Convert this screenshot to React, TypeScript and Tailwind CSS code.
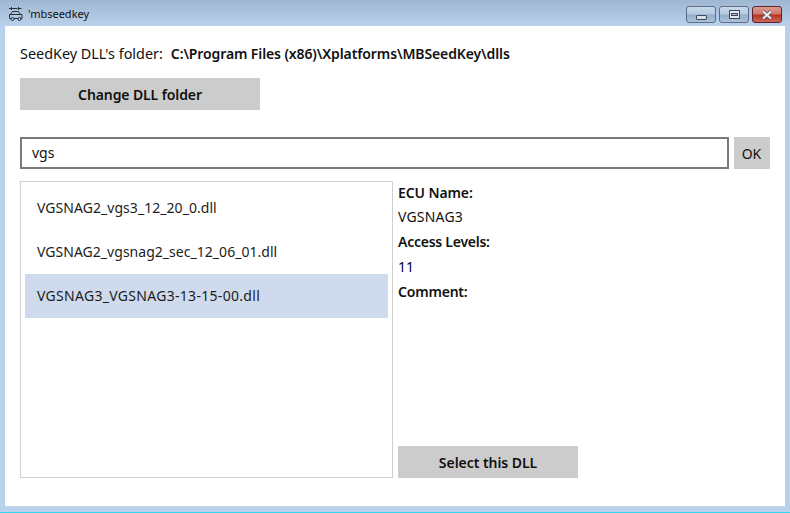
import React from "react";

const font = { fontFamily: '"Noto Sans", "Open Sans", sans-serif' };

function AppIcon() {
  return (
    <svg width="16" height="16" viewBox="0 0 16 16" fill="none" stroke="#2a2f38" strokeWidth="1">
      <path d="M1 2.5h2M3.5 1v3M3.5 2.5h6M10.5 1v3M10.5 2.5h3" />
      <path d="M2.5 8.5 4.5 5.5h6l2 3" />
      <path d="M1.5 8.5h12.5v4h-12.5z" />
      <circle cx="4.5" cy="13" r="1.5" fill="#b9cde4" />
      <circle cx="11.5" cy="13" r="1.5" fill="#b9cde4" />
    </svg>
  );
}

function CaptionButton({ kind }: { kind: "min" | "max" | "close" }) {
  const isClose = kind === "close";
  return (
    <div
      className={
        "flex h-[17px] w-[30px] items-center justify-center rounded-[3px] border " +
        (isClose
          ? "border-[#5c2230] bg-[linear-gradient(#dc9a90_0%,#cf7a6c_45%,#b8321f_55%,#c9695a_100%)]"
          : "border-[#5d6d8a] bg-[linear-gradient(#c9d9ea_0%,#b4cbe2_45%,#92aecb_55%,#abc4dc_100%)]")
      }
    >
      {kind === "min" && <div className="mt-[6px] h-[5px] w-[11px] rounded-[1px] border border-[#3f4654] bg-[#d9dfe8]" />}
      {kind === "max" && (
        <div className="flex h-[9px] w-[11px] items-center justify-center border border-[#3f4654] bg-[#e4e8ee]">
          <div className="h-[3px] w-[7px] border border-[#3f4654] bg-[#a9c0d8]" />
        </div>
      )}
      {isClose && (
        <svg width="12" height="10" viewBox="0 0 12 10">
          <path d="M2 1.5 10 8.5M10 1.5 2 8.5" stroke="#4b5563" strokeWidth="3.4" />
          <path d="M2 1.5 10 8.5M10 1.5 2 8.5" stroke="#eef1f5" strokeWidth="2" />
        </svg>
      )}
    </div>
  );
}

export default function App() {
  return (
    <div className="flex h-[513px] w-[790px] flex-col overflow-hidden bg-[#b9d1ea]" style={font}>
      <div className="flex h-[26px] shrink-0 items-start justify-between bg-[linear-gradient(#9fb6d2_0%,#b9d1ea_100%)]">
        <div className="flex items-center gap-[4px] pl-[8px] pt-[6px]">
          <AppIcon />
          <span className="text-[11px] leading-4 text-[#111]">'mbseedkey</span>
        </div>
        <div className="flex gap-[3px] pr-[8px] pt-[6px]">
          <CaptionButton kind="min" />
          <CaptionButton kind="max" />
          <CaptionButton kind="close" />
        </div>
      </div>

      <div className="mx-[5px] flex h-[480px] flex-col bg-white px-[15px] text-[#111]">
        <div className="mt-[17px] mb-[1px] flex h-[21px] items-center text-[14.4px]">
          <span>SeedKey DLL's folder:</span>
          <span className="ml-[8px] text-[14px] font-semibold tracking-[-0.11px]">C:\Program Files (x86)\Xplatforms\MBSeedKey\dlls</span>
        </div>
        <button className="mt-[13px] h-8 w-60 bg-[#cccccc] text-[14px] font-semibold tracking-[-0.1px] text-[#111]">
          Change DLL folder
        </button>
        <div className="mt-[27px] flex gap-[5px]">
          <div className="flex h-8 w-[709px] items-center border-2 border-[#7a7a7a] pb-[2px] pl-[10px] text-[14px]">vgs</div>
          <button className="h-8 w-9 bg-[#cccccc] pr-[1px] text-[14px] text-[#111]">OK</button>
        </div>
        <div className="mt-[12px] flex h-[297px]">
          <div className="w-[373px] border border-[#d0d0d0] px-1 pt-[4px] text-[14px] text-[#1c1c1c]">
            <div className="flex h-11 items-center pb-[1px] pl-3 tracking-[0.05px]">VGSNAG2_vgs3_12_20_0.dll</div>
            <div className="flex h-11 items-center pb-[2px] pl-3 tracking-[0.03px]">VGSNAG2_vgsnag2_sec_12_06_01.dll</div>
            <div className="flex h-11 items-center bg-[#cfdbec] pb-[2px] pl-3 tracking-[0.3px]">VGSNAG3_VGSNAG3-13-15-00.dll</div>
          </div>
          <div className="ml-[5px] flex flex-1 flex-col text-[14px] leading-[25px]">
            <div className="-mt-[1px] font-semibold tracking-[-0.1px]">ECU Name:</div>
            <div className="-mt-[1px] tracking-[0.2px]">VGSNAG3</div>
            <div className="font-semibold tracking-[-0.25px]">Access Levels:</div>
            <div className="text-[#00003c]">11</div>
            <div className="font-semibold tracking-[-0.2px]">Comment:</div>
            <button className="mt-auto h-8 w-[180px] bg-[#cccccc] font-semibold tracking-[-0.05px] text-[#111]">Select this DLL</button>
          </div>
        </div>
      </div>
      <div className="flex-1" />
      <div className="h-px shrink-0 bg-[#35d6f0]" />
    </div>
  );
}
